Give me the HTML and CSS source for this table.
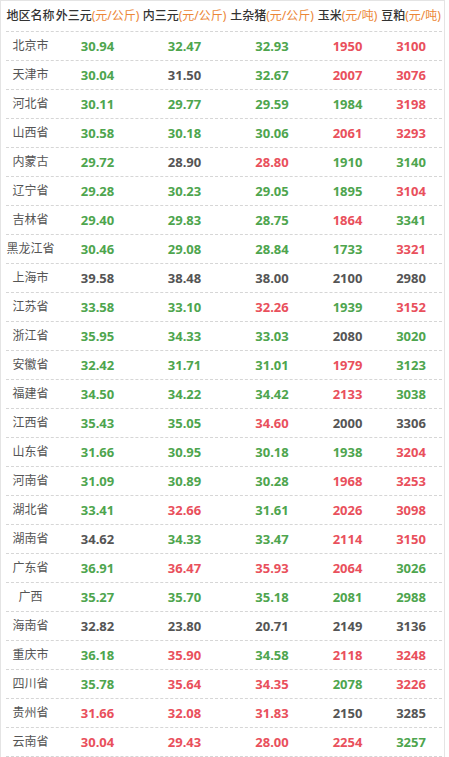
FILE: index.html
```html
<!DOCTYPE html>
<html lang="zh-CN">
<head>
<meta charset="utf-8">
<title>生猪与饲料价格</title>
<link rel="stylesheet" href="styles.css">
</head>
<body>
<div class="board">
  <div class="row head">
    <div class="c">地区名称</div>
    <div class="c">外三元<span class="unit">(元/公斤)</span></div>
    <div class="c">内三元<span class="unit">(元/公斤)</span></div>
    <div class="c">土杂猪<span class="unit">(元/公斤)</span></div>
    <div class="c">玉米<span class="unit">(元/吨)</span></div>
    <div class="c">豆粕<span class="unit">(元/吨)</span></div>
  </div>
  <div class="row"><div class="c n">北京市</div><div class="c g">30.94</div><div class="c g">32.47</div><div class="c g">32.93</div><div class="c r">1950</div><div class="c r">3100</div></div>
  <div class="row"><div class="c n">天津市</div><div class="c g">30.04</div><div class="c d">31.50</div><div class="c g">32.67</div><div class="c r">2007</div><div class="c r">3076</div></div>
  <div class="row"><div class="c n">河北省</div><div class="c g">30.11</div><div class="c g">29.77</div><div class="c g">29.59</div><div class="c g">1984</div><div class="c r">3198</div></div>
  <div class="row"><div class="c n">山西省</div><div class="c g">30.58</div><div class="c g">30.18</div><div class="c g">30.06</div><div class="c r">2061</div><div class="c r">3293</div></div>
  <div class="row"><div class="c n">内蒙古</div><div class="c g">29.72</div><div class="c d">28.90</div><div class="c r">28.80</div><div class="c g">1910</div><div class="c g">3140</div></div>
  <div class="row"><div class="c n">辽宁省</div><div class="c g">29.28</div><div class="c g">30.23</div><div class="c g">29.05</div><div class="c g">1895</div><div class="c r">3104</div></div>
  <div class="row"><div class="c n">吉林省</div><div class="c g">29.40</div><div class="c g">29.83</div><div class="c g">28.75</div><div class="c r">1864</div><div class="c g">3341</div></div>
  <div class="row"><div class="c n">黑龙江省</div><div class="c g">30.46</div><div class="c g">29.08</div><div class="c g">28.84</div><div class="c g">1733</div><div class="c r">3321</div></div>
  <div class="row"><div class="c n">上海市</div><div class="c d">39.58</div><div class="c d">38.48</div><div class="c d">38.00</div><div class="c d">2100</div><div class="c d">2980</div></div>
  <div class="row"><div class="c n">江苏省</div><div class="c g">33.58</div><div class="c g">33.10</div><div class="c r">32.26</div><div class="c g">1939</div><div class="c r">3152</div></div>
  <div class="row"><div class="c n">浙江省</div><div class="c g">35.95</div><div class="c g">34.33</div><div class="c g">33.03</div><div class="c d">2080</div><div class="c g">3020</div></div>
  <div class="row"><div class="c n">安徽省</div><div class="c g">32.42</div><div class="c g">31.71</div><div class="c g">31.01</div><div class="c r">1979</div><div class="c g">3123</div></div>
  <div class="row"><div class="c n">福建省</div><div class="c g">34.50</div><div class="c g">34.22</div><div class="c g">34.42</div><div class="c r">2133</div><div class="c g">3038</div></div>
  <div class="row"><div class="c n">江西省</div><div class="c g">35.43</div><div class="c g">35.05</div><div class="c r">34.60</div><div class="c d">2000</div><div class="c d">3306</div></div>
  <div class="row"><div class="c n">山东省</div><div class="c g">31.66</div><div class="c g">30.95</div><div class="c g">30.18</div><div class="c g">1938</div><div class="c r">3204</div></div>
  <div class="row"><div class="c n">河南省</div><div class="c g">31.09</div><div class="c g">30.89</div><div class="c g">30.28</div><div class="c r">1968</div><div class="c r">3253</div></div>
  <div class="row"><div class="c n">湖北省</div><div class="c g">33.41</div><div class="c r">32.66</div><div class="c g">31.61</div><div class="c r">2026</div><div class="c r">3098</div></div>
  <div class="row"><div class="c n">湖南省</div><div class="c d">34.62</div><div class="c g">34.33</div><div class="c g">33.47</div><div class="c r">2114</div><div class="c r">3150</div></div>
  <div class="row"><div class="c n">广东省</div><div class="c g">36.91</div><div class="c r">36.47</div><div class="c r">35.93</div><div class="c r">2064</div><div class="c g">3026</div></div>
  <div class="row"><div class="c n">广西</div><div class="c g">35.27</div><div class="c g">35.70</div><div class="c g">35.18</div><div class="c g">2081</div><div class="c g">2988</div></div>
  <div class="row"><div class="c n">海南省</div><div class="c d">32.82</div><div class="c d">23.80</div><div class="c d">20.71</div><div class="c d">2149</div><div class="c d">3136</div></div>
  <div class="row"><div class="c n">重庆市</div><div class="c g">36.18</div><div class="c r">35.90</div><div class="c g">34.58</div><div class="c r">2118</div><div class="c r">3248</div></div>
  <div class="row"><div class="c n">四川省</div><div class="c g">35.78</div><div class="c r">35.64</div><div class="c r">34.35</div><div class="c g">2078</div><div class="c r">3226</div></div>
  <div class="row"><div class="c n">贵州省</div><div class="c r">31.66</div><div class="c r">32.08</div><div class="c r">31.83</div><div class="c d">2150</div><div class="c d">3285</div></div>
  <div class="row"><div class="c n">云南省</div><div class="c r">30.04</div><div class="c r">29.43</div><div class="c r">28.00</div><div class="c r">2254</div><div class="c g">3257</div></div>
</div>
</body>
</html>
```

FILE: styles.css
```css
html, body {
  margin: 0;
  padding: 0;
  background: #ffffff;
}

body {
  font-family: "Noto Sans", "Noto Sans CJK SC", sans-serif;
  font-size: 12px;
  color: #555555;
}

.board {
  width: 436px;
  border: 1px solid #e4e4e4;
  border-bottom: none;
  padding: 0 2px 0 5px;
}

.row {
  display: grid;
  grid-template-columns: 49px 85px 89px 86px 65px 62px;
  height: 28px;
  align-items: center;
  border-bottom: 1px dashed #d6d6d6;
}

.row.head {
  height: 30px;
}

.c {
  text-align: center;
  white-space: nowrap;
  line-height: 16px;
}

.head .c {
  color: #333333;
  font-weight: 500;
  font-size: 12px;
}

.head .unit {
  color: #ec8636;
  font-weight: normal;
}

.n {
  color: #555555;
  font-size: 12px;
}

.g, .r, .d {
  font-weight: bold;
  font-size: 13px;
}

.g { color: #4ea54e; }
.r { color: #e9505c; }
.d { color: #555555; }
```
